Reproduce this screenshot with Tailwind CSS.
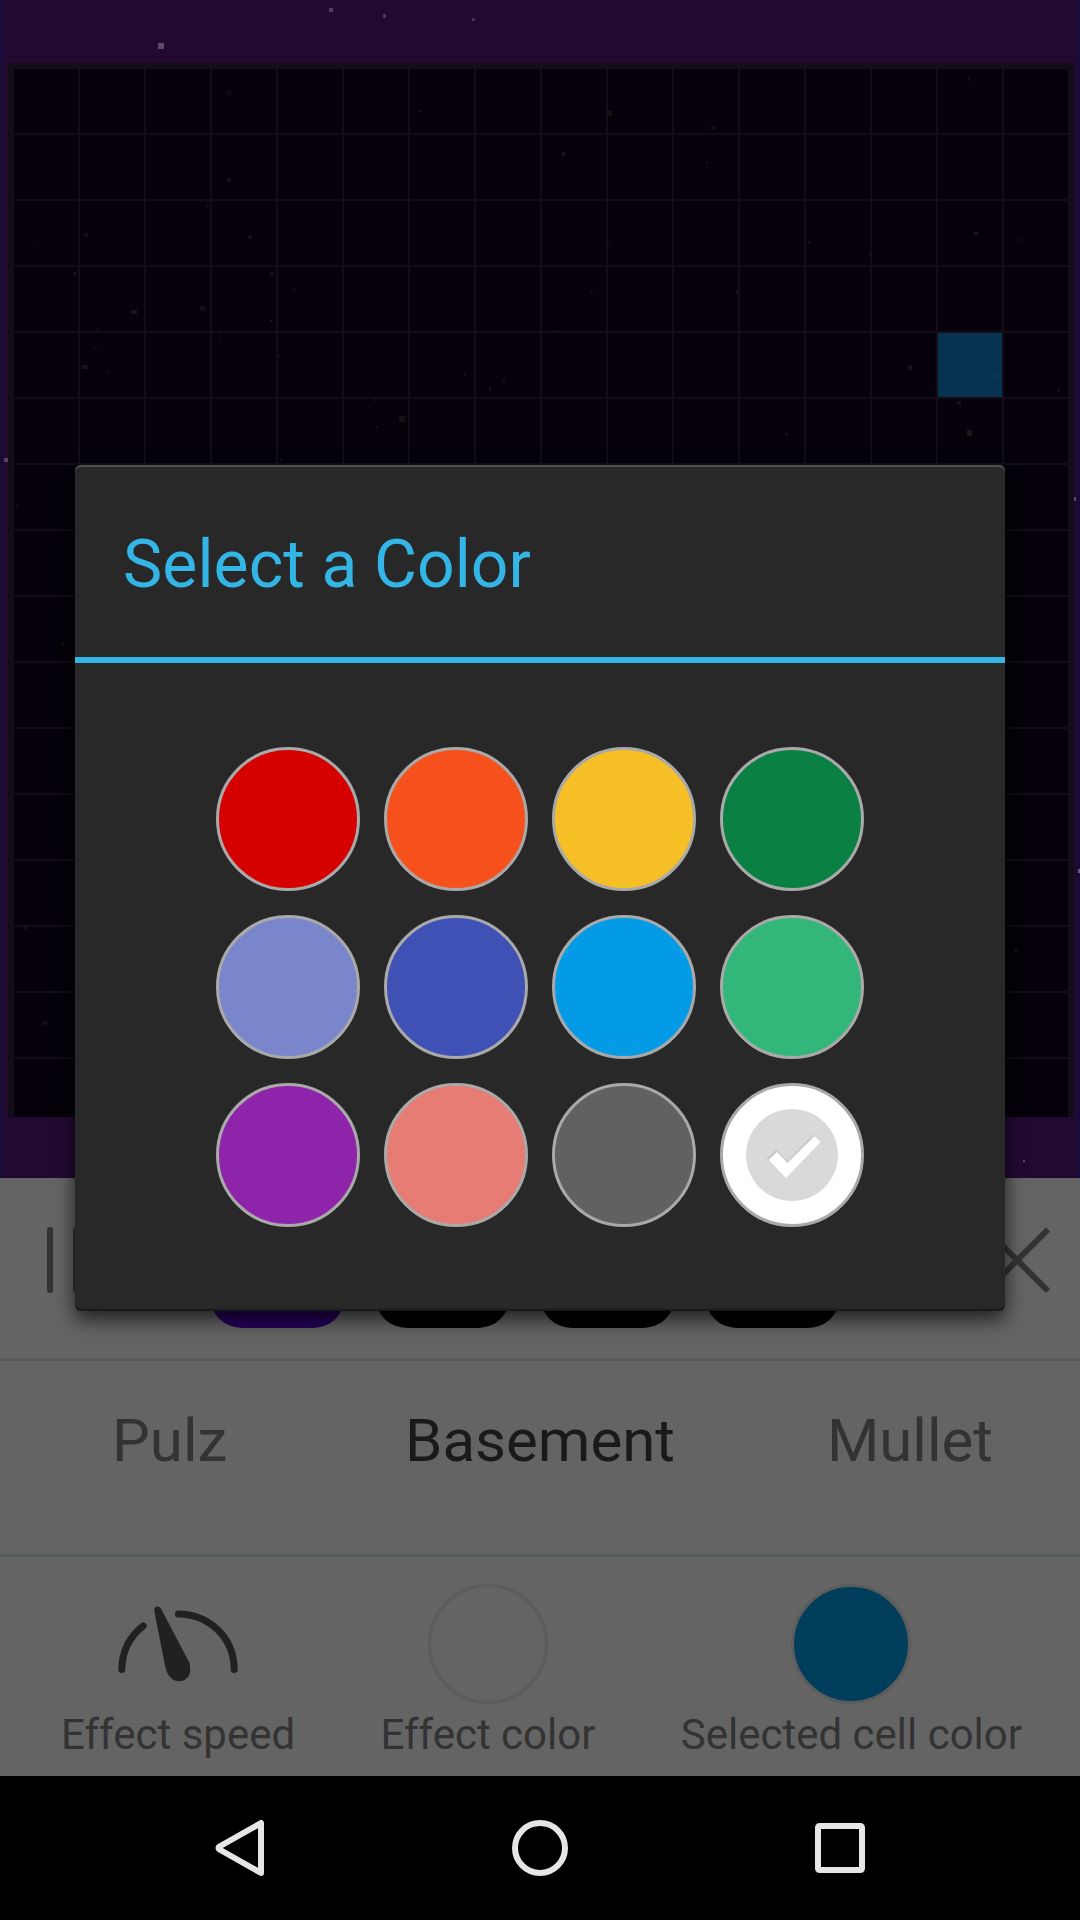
<!DOCTYPE html>
<html lang="en">
<head>
    <meta charset="UTF-8">
    <meta name="viewport" content="width=device-width, initial-scale=1.0">
    <title>Select a Color</title>
    <script src="https://cdn.jsdelivr.net/npm/@tailwindcss/browser@4"></script>
</head>
<body class="bg-black">
    <div class="relative flex flex-col w-[1080px] h-[1920px] overflow-hidden font-['Roboto',sans-serif]">

        <!-- wallpaper preview -->
        <div class="relative h-[1178px] pt-[63px] px-[8px] pb-[61px] bg-linear-to-r from-[#140b3a] from-[1px] via-[#220932] via-[3px] to-[#220932]">
            <div class="absolute top-0 right-0 w-1 h-full bg-linear-to-r from-[#220932] to-[#140b3a] to-75%"></div>
            <div class="relative w-[1066px] h-[1054px] px-1.5 pt-1.5 bg-[#120d16] overflow-hidden">
                <div id="cells" class="grid grid-cols-[repeat(16,64px)] auto-rows-[64px] gap-0.5"></div>
            </div>
            <svg id="stars" class="absolute inset-0" width="1080" height="1178"></svg>
        </div>

        <!-- settings -->
        <div class="flex flex-col h-[598px] bg-[#646464] text-[#333]">
            <div class="flex h-[180px] relative">
                <div class="flex gap-5 pl-[47px] pt-[49px]">
                    <div class="w-1.5 h-[66px] rounded-full bg-[#333]"></div>
                    <div class="w-1.5 h-[66px] rounded-full bg-[#333]"></div>
                </div>
                <div class="flex gap-[30px] pl-[131px] pt-[15px]">
                    <div class="w-[135px] h-[135px] rounded-[32px] bg-[#25005a]"></div>
                    <div class="w-[135px] h-[135px] rounded-[32px] bg-black"></div>
                    <div class="w-[135px] h-[135px] rounded-[32px] bg-black"></div>
                    <div class="w-[135px] h-[135px] rounded-[32px] bg-black"></div>
                </div>
                <svg class="ml-auto mr-[28px] mt-[47px]" width="70" height="70" viewBox="0 0 70 70" stroke="#333" stroke-width="6" fill="none">
                    <path d="M4.500 4.500L66 66M66 4.500L4.500 66"/>
                </svg>
            </div>
            <div class="h-[3px] bg-[#555a5a]"></div>
            <div class="flex h-[193px] pt-[45px] pl-[112px] pr-[87px] text-[60px] leading-[70px]">
                <span class="w-[293px]">Pulz</span>
                <span class="w-[270px] text-center text-[#1a1a1a]">Basement</span>
                <span class="ml-auto">Mullet</span>
            </div>
            <div class="h-[3px] bg-[#555a5a]"></div>
            <div class="flex justify-between pt-[27px] pl-[61px] pr-[58px] text-[42px] leading-[49px] whitespace-nowrap">
                <div class="flex flex-col items-center gap-[6px]">
                    <svg width="120" height="120" viewBox="0 0 120 120">
                        <g fill="none" stroke="#212121" stroke-width="7" stroke-linecap="round">
                            <path d="M3.800 85.500C4 68 11 53 25.200 42"/>
                            <path d="M60.500 30C91 30.500 116 53 116.200 85.500"/>
                        </g>
                        <path d="M36.200 26.500C36 21.500 42 21.500 43.500 25.500L71 78C77 96 61 101.500 53 94C49 90 48 86 46.500 79Z" fill="#212121"/>
                    </svg>
                    <span>Effect speed</span>
                </div>
                <div class="flex flex-col items-center gap-[6px]">
                    <div class="w-[120px] h-[120px] rounded-full border-3 border-[#5c5c5c]"></div>
                    <span>Effect color</span>
                </div>
                <div class="flex flex-col items-center gap-[6px]">
                    <div class="w-[120px] h-[120px] rounded-full border-3 border-[#5c5c5c] bg-[#003e5c]"></div>
                    <span>Selected cell color</span>
                </div>
            </div>
        </div>

        <!-- android navigation bar -->
        <div class="flex items-center justify-between h-[144px] px-[210px] bg-black">
            <svg width="60" height="60" viewBox="0 0 60 60" fill="none" stroke="#e6e6e6" stroke-width="6" stroke-linejoin="round">
                <path d="M51 5V55L9.500 31.500Q7.500 30 9.500 28.500Z"/>
            </svg>
            <svg width="60" height="60" viewBox="0 0 60 60" fill="none" stroke="#e6e6e6" stroke-width="6">
                <circle cx="30" cy="30" r="25"/>
            </svg>
            <svg width="60" height="60" viewBox="0 0 60 60" fill="none" stroke="#e6e6e6" stroke-width="6">
                <rect x="8" y="8" width="44" height="44" rx="1.500"/>
            </svg>
        </div>

        <!-- dialog -->
        <div class="absolute inset-x-0 top-0 h-[1776px] flex items-center justify-center">
            <div class="flex flex-col w-[930px] h-[846px] rounded-[6px] bg-[#282828] shadow-[0_8px_20px_rgba(0,0,0,0.7),inset_0_2px_1px_#525154,inset_0_-2px_1px_#191919]">
                <div class="h-[192px] flex items-center pl-[48px] pt-[6px] text-[66px] tracking-[0.1px] text-[#33b5e5]">Select a Color</div>
                <div class="h-1.5 bg-[#33b5e5]"></div>
                <div class="grid grid-cols-[repeat(4,144px)] gap-6 justify-center pt-[84px]">
                    <div class="size-36 rounded-full border-3 border-[#a9a9a9] bg-[#d50000]"></div>
                    <div class="size-36 rounded-full border-3 border-[#a9a9a9] bg-[#f6511d]"></div>
                    <div class="size-36 rounded-full border-3 border-[#a9a9a9] bg-[#f6bf26]"></div>
                    <div class="size-36 rounded-full border-3 border-[#a9a9a9] bg-[#0b8043]"></div>
                    <div class="size-36 rounded-full border-3 border-[#a9a9a9] bg-[#7986cb]"></div>
                    <div class="size-36 rounded-full border-3 border-[#a9a9a9] bg-[#3f51b5]"></div>
                    <div class="size-36 rounded-full border-3 border-[#a9a9a9] bg-[#039be5]"></div>
                    <div class="size-36 rounded-full border-3 border-[#a9a9a9] bg-[#33b679]"></div>
                    <div class="size-36 rounded-full border-3 border-[#a9a9a9] bg-[#8e24aa]"></div>
                    <div class="size-36 rounded-full border-3 border-[#a9a9a9] bg-[#e67c73]"></div>
                    <div class="size-36 rounded-full border-3 border-[#a9a9a9] bg-[#616161]"></div>
                    <div class="size-36 rounded-full border-3 border-[#a9a9a9] bg-white flex items-center justify-center">
                        <svg width="92" height="92" viewBox="0 0 92 92">
                            <circle cx="46" cy="46" r="46" fill="#d9d9d9"/>
                            <path d="M20.500 50L30 40.500L41.500 52L67.500 25L73 32.500L40 67Z" fill="#c8c8c8"/>
                            <path d="M22.500 51L31 43L41.500 54L68.500 27L74.500 33L40 69Z" fill="#fff"/>
                        </svg>
                    </div>
                </div>
            </div>
        </div>
    </div>
</body>
<script>
    let cells = document.querySelector("#cells");
    for (let i = 0; i < 256; i++) {
        let cell = document.createElement("div");
        // row 5, column 15 is the selected one
        cell.className = i == 78 ? "bg-[#083251]" : "bg-[#050009]";
        cells.append(cell);
    }

    // x, y, width, height, colour
    let stars = [
        [158,43,6,6,"#5b4a63"],[329,8,4,4,"#54405f"],[383,14,3,4,"#4a3856"],[472,18,3,3,"#44324f"],
        [4,458,4,4,"#55426a"],[1074,497,2,4,"#5a4a70"],[1078,869,2,4,"#6a5a7a"],[1023,1160,2,2,"#5a4a66"],
        [227,91,4,4,"#0e0c10"],[227,178,4,4,"#121114"],[206,205,3,2,"#100f12"],[84,233,4,4,"#0e0d10"],
        [248,235,4,4,"#121114"],[33,245,3,2,"#0b0a0b"],[73,272,3,3,"#141315"],[270,272,4,4,"#111012"],
        [293,289,2,3,"#111012"],[131,310,6,4,"#151618"],[200,306,5,5,"#101012"],[270,320,2,2,"#1b1b1d"],
        [97,328,3,2,"#0f0e0e"],[219,335,2,2,"#161616"],[94,347,3,2,"#0f0e0e"],[82,365,6,4,"#121415"],
        [108,371,2,2,"#12110f"],[277,355,3,2,"#12110f"],[464,373,2,3,"#110e0b"],[489,387,2,4,"#141414"],
        [502,379,3,4,"#100f10"],[374,399,2,2,"#141412"],[399,416,6,6,"#121314"],[376,426,2,2,"#121210"],
        [280,458,2,2,"#111111"],[16,505,2,2,"#141414"],[607,111,5,5,"#14140f"],[711,126,4,4,"#101113"],
        [562,152,3,4,"#171711"],[706,162,2,2,"#151517"],[968,77,2,4,"#111011"],[607,245,3,2,"#0e0e0c"],
        [808,241,2,3,"#121212"],[869,253,2,2,"#1c1b1e"],[974,232,4,3,"#171719"],[1019,239,3,2,"#131213"],
        [590,290,3,2,"#111010"],[736,290,4,3,"#151414"],[908,365,4,5,"#151517"],[996,375,2,2,"#1d4966"],
        [1057,389,3,3,"#111111"],[957,401,4,4,"#131313"],[967,430,5,6,"#181714"],[785,433,3,3,"#101010"],
        [823,438,3,2,"#0c0b0c"],[419,110,3,2,"#101010"],[555,330,4,3,"#111111"],[61,643,3,3,"#121210"],
        [24,927,3,2,"#121210"],[43,1021,4,4,"#12110f"],[1014,948,3,4,"#111210"]
    ];
    let sky = "";
    stars.map((s)=>{
        sky += `<rect x="${s[0]}" y="${s[1]}" width="${s[2]}" height="${s[3]}" fill="${s[4]}"/>`;
    })
    document.querySelector("#stars").innerHTML = sky;
</script>
</html>
